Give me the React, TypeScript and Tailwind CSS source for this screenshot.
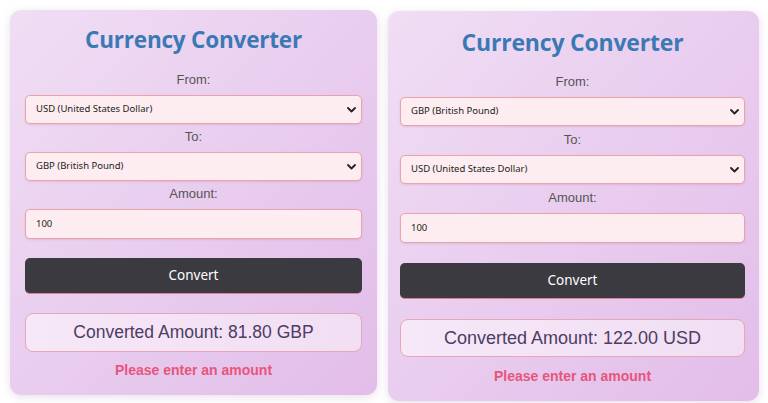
import * as React from 'react'

type Spacing = {
  title: string
  from: string
  gap: string
  label: string
  btn: string
  res: string
  resH: string
  err: string
  titleSize: string
  resSize: string
}

type CardProps = {
  from: string
  to: string
  result: string
  shell: string
  sp: Spacing
}

const Chevron = () => (
  <svg width="9" height="6" viewBox="0 0 9 6" className="absolute right-[5px] top-1/2 -translate-y-1/2">
    <path d="M1 1 L4.5 4.5 L8 1" fill="none" stroke="#222" strokeWidth="1.8" strokeLinecap="round" strokeLinejoin="round" />
  </svg>
)

const Field = (props: { value: string; select?: boolean; h: string }) => (
  <div
    className={`relative w-full ${props.h} flex items-center rounded-[5px] border border-[#e8a3ad] bg-[#fdedf0] pl-[10px] text-[9.5px] text-[#222] shadow-[0_1px_2px_rgba(200,120,140,0.25)]`}
    style={{ fontFamily: '"Noto Sans", "Open Sans", sans-serif' }}
  >
    {props.value}
    {props.select && <Chevron />}
  </div>
)

const Label = (props: { text: string }) => (
  <div
    className="h-[16px] leading-[16px] text-center text-[13px] text-[#555]"
    style={{ fontFamily: '"Liberation Sans", Arial, sans-serif' }}
  >
    {props.text}
  </div>
)

const Card = (props: CardProps) => {
  const { from, to, result, shell, sp } = props
  return (
    <div
      className={`${shell} flex flex-col rounded-[11px] bg-gradient-to-br from-[#f0def4] via-[#e9cdef] to-[#e2bde9] shadow-[0_2px_8px_rgba(120,80,140,0.18)]`}
    >
      <div
        className={`${sp.title} ${sp.titleSize} h-[32px] leading-[32px] text-center font-bold text-[#3b79b4]`}
        style={{ fontFamily: '"Open Sans", sans-serif', letterSpacing: '-0.2px' }}
      >
        Currency Converter
      </div>
      <div className={sp.from}>
        <Label text="From:" />
      </div>
      <div className={sp.gap}>
        <Field value={from} select h="h-[29px]" />
      </div>
      <div className={sp.label}>
        <Label text="To:" />
      </div>
      <div className={sp.gap}>
        <Field value={to} select h="h-[29px]" />
      </div>
      <div className={sp.label}>
        <Label text="Amount:" />
      </div>
      <div className={sp.gap}>
        <Field value="100" h="h-[30px]" />
      </div>
      <div
        className={`${sp.btn} h-[36px] w-full flex items-center justify-center rounded-[5px] bg-[#3b3a40] border-b border-[#e07f92] text-[13.5px] text-white`}
        style={{ fontFamily: '"Noto Sans", "Open Sans", sans-serif' }}
      >
        Convert
      </div>
      <div
        className={`${sp.res} ${sp.resH} ${sp.resSize} w-full flex items-center justify-center rounded-[8px] border border-[#e6a6b6] bg-gradient-to-r from-[#f6e8f8] to-[#f1def3] text-[#4d3c63]`}
        style={{ fontFamily: '"Liberation Sans", Arial, sans-serif' }}
      >
        {result}
      </div>
      <div
        className={`${sp.err} h-[16px] leading-[16px] text-center text-[14px] font-bold text-[#e8557b]`}
        style={{ fontFamily: '"Liberation Sans", Arial, sans-serif' }}
      >
        Please enter an amount
      </div>
    </div>
  )
}

const leftSp: Spacing = {
  title: 'mt-[14px]',
  from: 'mt-[16px]',
  gap: 'mt-[7px]',
  label: 'mt-[5px]',
  btn: 'mt-[19px]',
  res: 'mt-[19px]',
  resH: 'h-[39px]',
  err: 'mt-[10px]',
  titleSize: 'text-[22.5px]',
  resSize: 'text-[17.5px]',
}

const rightSp: Spacing = {
  title: 'mt-[15px]',
  from: 'mt-[16px]',
  gap: 'mt-[7px]',
  label: 'mt-[6px]',
  btn: 'mt-[20px]',
  res: 'mt-[20px]',
  resH: 'h-[38px]',
  err: 'mt-[11px]',
  titleSize: 'text-[23px]',
  resSize: 'text-[18px]',
}

export default function App() {
  return (
    <div className="w-[768px] h-[403px] bg-white flex items-start overflow-hidden">
      <Card
        from="USD (United States Dollar)"
        to="GBP (British Pound)"
        result="Converted Amount: 81.80 GBP"
        shell="ml-[10px] mt-[10px] w-[367px] h-[385px] pl-[15px] pr-[15px]"
        sp={leftSp}
      />
      <Card
        from="GBP (British Pound)"
        to="USD (United States Dollar)"
        result="Converted Amount: 122.00 USD"
        shell="ml-[11px] mt-[11px] w-[371px] h-[390px] pl-[12px] pr-[14px]"
        sp={rightSp}
      />
    </div>
  )
}
